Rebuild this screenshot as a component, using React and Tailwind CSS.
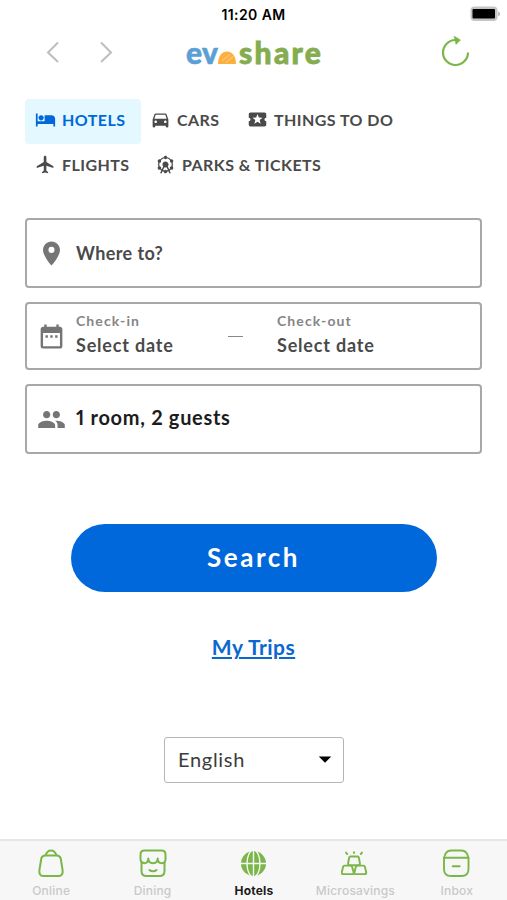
import { useState } from 'react';
import { MdLocalActivity, MdFlight, MdAttractions, MdPlace, MdDateRange, MdArrowDropDown } from 'react-icons/md';

function BedIcon({ className }) {
  return (
    <svg viewBox="0 0 24 24" fill="currentColor" className={className}>
      <path d="M7 13c1.66 0 3-1.34 3-3S8.66 7 7 7s-3 1.34-3 3 1.34 3 3 3zm12-6h-8v7H3V5H1v15h2v-3h18v3h2v-9c0-2.21-1.79-4-4-4z" />
    </svg>
  );
}

function CarIcon({ className }) {
  return (
    <svg viewBox="0 0 24 24" fill="currentColor" className={className}>
      <path d="M18.92 6.01C18.72 5.42 18.16 5 17.5 5h-11c-.66 0-1.21.42-1.42 1.01L3 12v8c0 .55.45 1 1 1h1c.55 0 1-.45 1-1v-1h12v1c0 .55.45 1 1 1h1c.55 0 1-.45 1-1v-8l-2.08-5.99zM6.5 16c-.83 0-1.5-.67-1.5-1.5S5.67 13 6.5 13s1.5.67 1.5 1.5S7.33 16 6.5 16zm11 0c-.83 0-1.5-.67-1.5-1.5s.67-1.5 1.5-1.5 1.5.67 1.5 1.5-.67 1.5-1.5 1.5zM5 11l1.5-4.5h11L19 11H5z" />
    </svg>
  );
}

function PeopleIcon({ className }) {
  return (
    <svg viewBox="0 0 24 24" fill="currentColor" className={className}>
      <path d="M16 11c1.66 0 2.99-1.34 2.99-3S17.66 5 16 5c-1.66 0-3 1.34-3 3s1.34 3 3 3zm-8 0c1.66 0 2.99-1.34 2.99-3S9.66 5 8 5C6.34 5 5 6.34 5 8s1.34 3 3 3zm0 2c-2.33 0-7 1.17-7 3.5V19h14v-2.5c0-2.33-4.67-3.5-7-3.5zm8 0c-.29 0-.62.02-.97.05 1.16.84 1.97 1.97 1.97 3.45V19h6v-2.5c0-2.33-4.67-3.5-7-3.5z" />
    </svg>
  );
}

const CATEGORY_ROWS = [
  [
    { id: 'hotels', label: 'HOTELS', Icon: BedIcon, box: 'w-[116px] pl-[10px] gap-[6px]' },
    { id: 'cars', label: 'CARS', Icon: CarIcon, box: 'w-[97px] pl-[9px] gap-[6px]' },
    { id: 'things', label: 'THINGS TO DO', Icon: MdLocalActivity, box: 'w-[165px] pl-[9px] gap-[6px]' },
  ],
  [
    { id: 'flights', label: 'FLIGHTS', Icon: MdFlight, box: 'w-[120px] pl-[10px] gap-[6px]' },
    { id: 'parks', label: 'PARKS & TICKETS', Icon: MdAttractions, box: 'w-[190px] pl-[10px] gap-[6px]' },
  ],
];

function BagIcon() {
  return (
    <svg width="28" height="30" viewBox="0 0 28 30" fill="none" stroke="#7ab648" strokeWidth="2" strokeLinejoin="round">
      <path d="M8.5 6.5h11c2.4 0 3.7 1 4.200 3l1.900 11.700c.5 3.800-.9 5.800-3.800 5.800H6.200c-2.900 0-4.300-2-3.800-5.800L4.300 9.500c.5-2 1.800-3 4.200-3z" />
      <path d="M8.5 6.500C9.500 3.300 11.300 1.500 14 1.500s4.500 1.800 5.500 5" />
    </svg>
  );
}

function StoreIcon() {
  return (
    <svg width="28" height="30" viewBox="0 0 28 30" fill="none" stroke="#7ab648" strokeWidth="2" strokeLinecap="round" strokeLinejoin="round">
      <path d="M5.5 1.5h17c2.5 0 4 1.5 4 4V10c0 2.5-1.5 4.200-3.800 4.200-2.400 0-4-1.700-4-4.600 0 2.900-1.700 4.600-4.700 4.600s-4.700-1.700-4.700-4.600c0 2.900-1.600 4.600-4 4.600-2.300 0-3.800-1.700-3.800-4.200V5.500c0-2.500 1.500-4 4-4z" />
      <path d="M2.500 13.500V22c0 3.500 1.500 5 5 5h13c3.500 0 5-1.500 5-5v-8.500" />
      <path d="M10.500 21c1.800 1.700 5.200 1.700 7 0" />
    </svg>
  );
}

function GlobeIcon() {
  return (
    <svg width="28" height="30" viewBox="0 0 28 30">
      <circle cx="13.5" cy="14.5" r="12.5" fill="#7ab648" />
      <g fill="none" stroke="#f7f7f7" strokeWidth="1.4">
        <path d="M.5 14.5h26M13.5 1.5v26" />
        <ellipse cx="13.5" cy="14.5" rx="6.5" ry="13.5" />
      </g>
    </svg>
  );
}

function SavingsIcon() {
  return (
    <svg width="28" height="30" viewBox="1 0 28 30" fill="none" stroke="#7ab648" strokeWidth="1.9" strokeLinecap="round" strokeLinejoin="round">
      <path d="M10.5 7.5h7c.8 0 1.2.4 1.4 1.2l1 5.800c.2 1.200-.3 1.800-1.400 1.800h-9c-1.100 0-1.600-.6-1.400-1.800l1-5.800c.2-.8.6-1.200 1.400-1.200z" />
      <path d="M4.500 16.600h6.200c.8 0 1.200.4 1.400 1.100l1.500 5.500c.3 1.200-.2 1.900-1.400 1.900H3.200c-1.200 0-1.700-.7-1.400-1.900l1.300-5.500c.2-.7.6-1.100 1.400-1.100z" />
      <path d="M17.300 16.600h6.200c.8 0 1.200.4 1.400 1.100l1.300 5.500c.3 1.200-.2 1.900-1.400 1.900h-9c-1.200 0-1.700-.7-1.400-1.900l1.500-5.500c.2-.7.6-1.100 1.400-1.100z" />
      <path d="M14 3.300v.8M6 3.500l1.200 1.600M22 3.500l-1.200 1.600" />
    </svg>
  );
}

function InboxIcon() {
  return (
    <svg width="28" height="30" viewBox="1 0 28 30" fill="none" stroke="#7ab648" strokeWidth="1.9" strokeLinecap="round" strokeLinejoin="round">
      <path d="M2 9.500c.8-5.500 3-8 7-8h10.500c4 0 6.200 2.500 7 8V20c0 4.700-2.300 7-7 7H9c-4.700 0-7-2.300-7-7z" />
      <path d="M2 8.800h24.500M10.700 17.200h7" />
    </svg>
  );
}

const NAV_ITEMS = [
  { id: 'online', label: 'Online', Icon: BagIcon },
  { id: 'dining', label: 'Dining', Icon: StoreIcon },
  { id: 'hotels', label: 'Hotels', Icon: GlobeIcon },
  { id: 'microsavings', label: 'Microsavings', Icon: SavingsIcon },
  { id: 'inbox', label: 'Inbox', Icon: InboxIcon },
];

function Battery() {
  return (
    <svg width="32" height="16" viewBox="0 0 32 16">
      <rect x="0.5" y="0.5" width="27" height="14.5" rx="4" fill="#c4c4c4" />
      <rect x="2.500" y="3" width="22.5" height="9.5" rx="1" fill="#000" />
      <path d="M28.3 5.500c2.200.8 2.200 4 0 4.800z" fill="#aaa" />
    </svg>
  );
}

function Logo() {
  return (
    <div className="flex items-baseline font-['Lato'] text-[30px] leading-[36px] font-black">
      <span className="w-[32px] tracking-[0.3px] text-[#5b9fd6] [-webkit-text-stroke:0.6px_#5b9fd6]">ev</span>
      <svg width="18" height="13" viewBox="0 0 18 13">
        <path d="M0 13C0 5.500 3.500 0.500 9 0.500s9 5 9 12.500z" fill="#fbb040" />
        <path d="M4 10l8-7M8 11.500l7-6" stroke="#fdd08a" strokeWidth="1" />
      </svg>
      <span className="ml-[3px] tracking-[2.3px] text-[#84ad4f] [-webkit-text-stroke:0.8px_#84ad4f]">share</span>
    </div>
  );
}

export default function App() {
  const [category, setCategory] = useState('hotels');
  const [tab, setTab] = useState('hotels');

  return (
    <div className="flex h-[900px] w-[507px] flex-col overflow-hidden bg-white font-['Lato',sans-serif] text-[#4a4a4a]">
      {/* Status bar */}
      <div className="grid h-7 grid-cols-3 items-center">
        <span className="col-start-2 text-center font-['Inter'] text-[14px] font-semibold tracking-[0.4px] whitespace-nowrap text-black">11:20 AM</span>
        <div className="flex justify-end pr-[5px] pb-px">
          <Battery />
        </div>
      </div>

      {/* Header */}
      <header className="flex h-[49px] items-center justify-between pr-[36px] pb-[2px] pl-[46px]">
        <div className="flex w-[140px] gap-[39px]">
          <svg width="14" height="22" viewBox="0 0 14 22" fill="none" stroke="#bdbdbd" strokeWidth="2">
            <path d="M12 1.5L2 11.5l10 9.5" />
          </svg>
          <svg width="14" height="22" viewBox="0 0 14 22" fill="none" stroke="#bdbdbd" strokeWidth="2">
            <path d="M2 1.5L12 11.5 2 21" />
          </svg>
        </div>
        <div className="flex-1">
          <Logo />
        </div>
        <svg width="30" height="32" viewBox="0 0 30 32" fill="none" stroke="#7ab648" strokeWidth="2.2">
          <path d="M27 16.500A12.500 12.500 0 1 1 14.500 4h1" />
          <path d="M13 0l6.500 4-4.500 4.500z" fill="#7ab648" stroke="#7ab648" strokeWidth="0.5" />
        </svg>
      </header>

      {/* Categories */}
      <nav className="mt-[22px] pl-[25px]">
        {CATEGORY_ROWS.map((row, i) => (
          <div key={i} className="flex h-[45px]">
            {row.map(({ id, label, Icon, box }) => (
              <button
                key={id}
                onClick={() => setCategory(id)}
                className={`flex h-[45px] items-center rounded-[4px] pb-[4px] whitespace-nowrap ${box} ${
                  category === id ? 'bg-[#e4f8ff] text-[#0068db]' : 'text-[#4a4a4a]'
                }`}
              >
                <Icon className="size-[21px] shrink-0" />
                <span className="text-[16px] font-bold tracking-[0.45px]">{label}</span>
              </button>
            ))}
          </div>
        ))}
      </nav>

      {/* Search form */}
      <form className="mt-[29px] flex flex-col px-[25px]" onSubmit={(e) => e.preventDefault()}>
        <div className="flex h-[70px] items-center gap-[10px] rounded-[4px] border-2 border-[#a8a8a8] pl-[10px]">
          <MdPlace className="size-[29px] text-[#757575]" />
          <span className="text-[18px] font-bold tracking-[0.4px]">Where to?</span>
        </div>
        <div className="mt-[14px] flex h-[68px] items-center rounded-[4px] border-2 border-[#a8a8a8] pl-[10px]">
          <MdDateRange className="size-[29px] text-[#757575]" />
          <div className="ml-[10px] w-[152px] pb-[2px]">
            <p className="text-[14px] leading-[20px] font-bold tracking-[1.1px] text-[#858585]">Check-in</p>
            <p className="text-[18px] leading-[28px] font-bold tracking-[0.8px]">Select date</p>
          </div>
          <span className="h-[1px] w-[15px] bg-[#888]" />
          <div className="ml-[34px] pb-[2px]">
            <p className="text-[14px] leading-[20px] font-bold tracking-[1.1px] text-[#858585]">Check-out</p>
            <p className="text-[18px] leading-[28px] font-bold tracking-[0.8px]">Select date</p>
          </div>
        </div>
        <div className="mt-[14px] flex h-[70px] items-center gap-[10px] rounded-[4px] border-2 border-[#a8a8a8] pl-[10px]">
          <PeopleIcon className="size-[29px] text-[#757575]" />
          <span className="pb-[5px] text-[20px] font-bold tracking-[0.7px] text-[#1c1c1c] proportional-nums">1 room, 2 guests</span>
        </div>
        <button className="mx-auto mt-[70px] h-[68px] w-[366px] rounded-full bg-[#0068db] pb-[2px] text-[26px] font-bold tracking-[2.5px] text-white">
          Search
        </button>
      </form>

      <a className="mt-[41px] self-center text-[21px] leading-[28px] font-bold tracking-[0.5px] text-[#0b68cf] underline decoration-[1.5px] underline-offset-[2px]">
        My Trips
      </a>

      <button className="mt-[76px] ml-px flex h-[46px] w-[180px] items-center justify-between self-center rounded-[3px] border border-[#b5b5b5] pr-[3px] pb-[2px] pl-[13px] text-[20px] text-[#3c3c3c]">
        <span className="tracking-[0.7px]">English</span>
        <MdArrowDropDown className="size-[30px] text-black" />
      </button>

      {/* Bottom tabs */}
      <footer className="mt-auto grid h-[61px] grid-cols-5 border-t-2 border-[#e6e6e6] bg-[#f7f7f7]">
        {NAV_ITEMS.map(({ id, label, Icon }) => (
          <button key={id} onClick={() => setTab(id)} className="flex flex-col items-center pt-[8px] pl-px">
            <Icon />
            <span
              className={`mt-[4px] font-['Inter'] text-[12px] leading-[16px] tracking-[0.2px] ${
                tab === id ? 'font-bold text-[#1c1c1c]' : 'font-medium text-[#c9c9c9]'
              }`}
            >
              {label}
            </span>
          </button>
        ))}
      </footer>
    </div>
  );
}
